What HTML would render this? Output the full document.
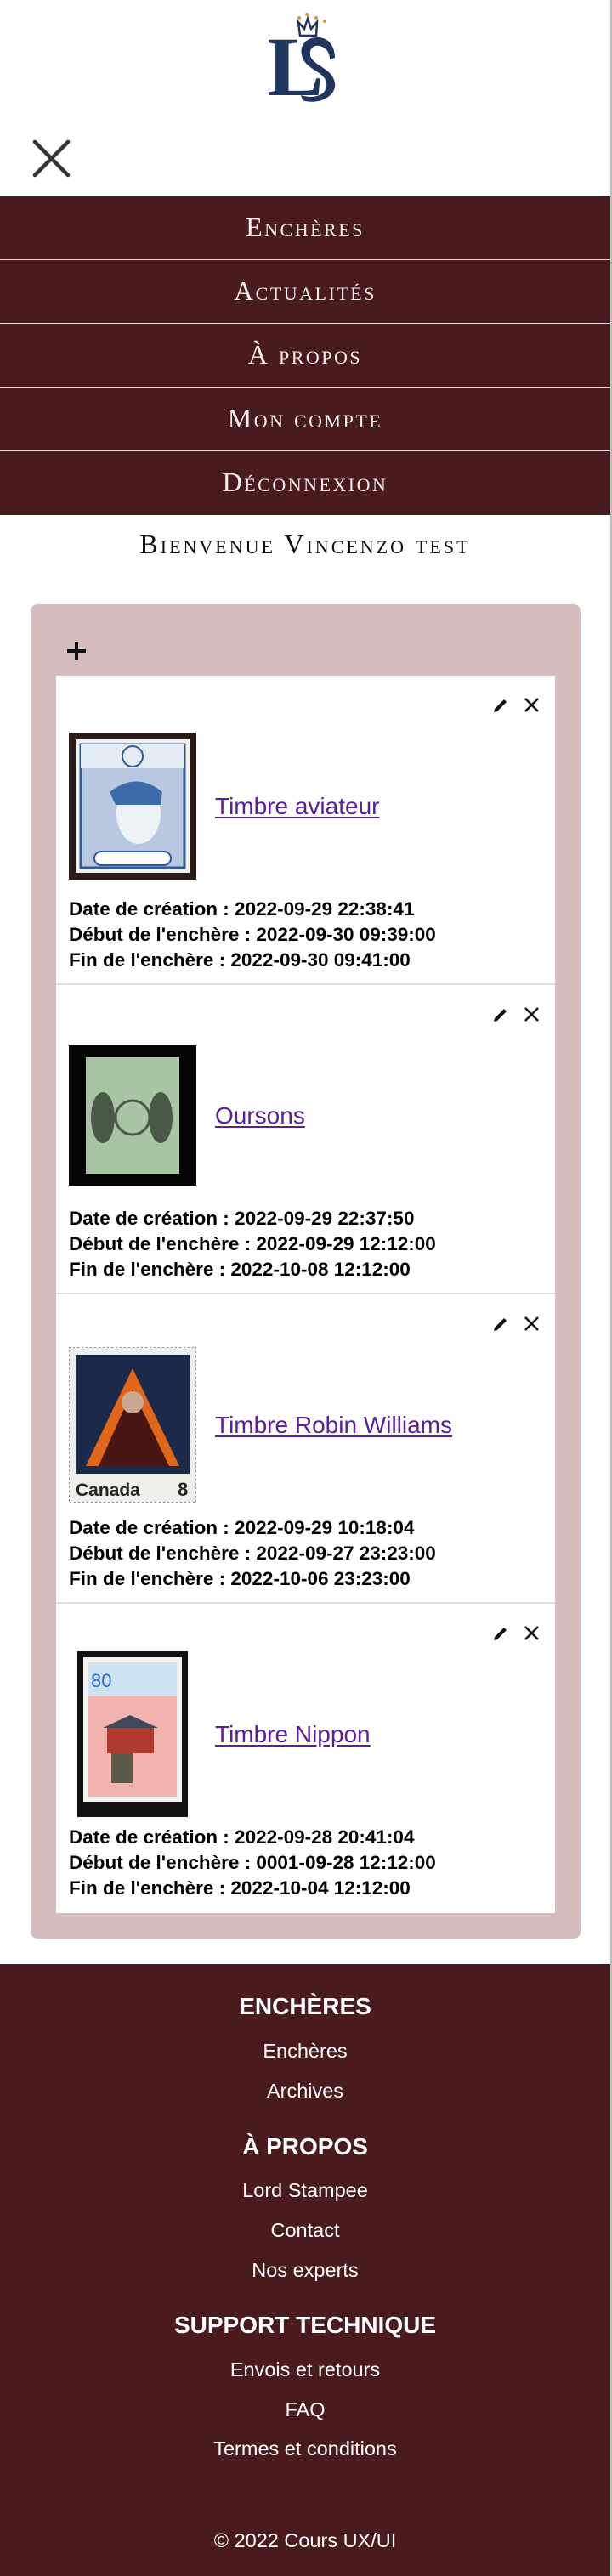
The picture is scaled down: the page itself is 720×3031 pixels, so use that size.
<!DOCTYPE html>
<html><head><meta charset="utf-8">
<style>
*{box-sizing:border-box;margin:0;padding:0}
html,body{width:720px;height:3031px;background:#fff;overflow:hidden}
body{font-family:"Liberation Sans","DejaVu Sans",sans-serif;position:relative}
.edge{position:absolute;right:0;top:0;width:2px;height:3031px;background:#bdbdbd;z-index:5}
.logo{position:absolute;left:316px;top:14px;width:90px;height:110px}
.close{position:absolute;left:38px;top:164px;width:45px;height:45px}
nav{position:absolute;top:231px;left:0;width:718px}
nav div{height:75px;background:#4a1b1d;color:#f3eded;font-family:"Liberation Serif",serif;font-variant:small-caps;font-size:32px;letter-spacing:2.5px;text-align:center;line-height:72px;border-bottom:1px solid #e8dede}
nav div:last-child{border-bottom:none;height:75px}
.welcome{position:absolute;top:622px;left:0;width:718px;text-align:center;font-family:"Liberation Serif",serif;font-variant:small-caps;font-size:32px;letter-spacing:3px;color:#111}
.panel{position:absolute;left:36px;top:711px;width:647px;height:1570px;background:#d5bdbe;border-radius:8px}
.plus{position:absolute;left:42px;top:43px;width:24px;height:24px}
.card{position:absolute;left:30px;top:84px;width:587px;height:1456px;background:#fff}
.item{position:relative;height:364px;border-bottom:2px solid #dde0e6}
.item:last-child{border-bottom:none}
.icons{position:absolute;right:18px;top:25px;width:56px;height:20px}
.row{position:absolute;left:15px;top:67px;height:173px;display:flex;align-items:center}
.st{width:172px;display:flex;align-items:center}
.row a{color:#5a1e9a;font-size:28px;text-decoration:underline;text-underline-offset:3px}
.dates{position:absolute;left:15px;top:260px;font-weight:bold;font-size:22.5px;line-height:30px;color:#000}
footer{position:absolute;top:2311px;left:0;width:718px;height:720px;background:#4a1b1d;color:#fff;text-align:center}
footer h3{position:absolute;left:0;width:100%;font-size:28px;font-weight:bold}
footer p{position:absolute;left:0;width:100%;font-size:23.5px}
</style></head><body>
<div class="edge"></div>
<svg class="logo" viewBox="0 0 90 110">
<g fill="#d49a3a"><circle cx="45" cy="3" r="2"/><circle cx="56" cy="7" r="2"/><circle cx="66" cy="11" r="2"/><circle cx="36" cy="7" r="2"/></g>
<path d="M37 28 L35 12 L42 20 L46 8 L50 20 L57 12 L56 28 Z" fill="none" stroke="#1f3560" stroke-width="2.5"/>
<text x="-2" y="98" font-family="Liberation Serif" font-weight="bold" font-size="100" fill="#1f3560">L</text>
<path d="M58 30 C40 30 34 45 42 58 C50 70 70 72 68 88 C66 100 50 102 38 98 L40 104 C58 110 80 100 78 84 C76 68 56 64 50 54 C46 46 52 38 60 40 C68 42 72 48 72 56 L78 54 C78 40 70 30 58 30Z" fill="#1f3560"/>
</svg>
<svg class="close" viewBox="0 0 45 45"><path d="M3 3 L42 42 M42 3 L3 42" stroke="#333" stroke-width="4.5" stroke-linecap="round"/></svg>
<nav><div>Enchères</div><div>Actualités</div><div>À propos</div><div>Mon compte</div><div>Déconnexion</div></nav>
<div class="welcome">Bienvenue Vincenzo test</div>
<div class="panel">
<svg class="plus" viewBox="0 0 24 24"><path d="M12 1V23M1 12H23" stroke="#111" stroke-width="4"/></svg>
<div class="card">

<div class="item">
<svg class="icons" viewBox="0 0 56 20"><path d="M2 18 L3 14 L14 3 L17 6 L6 17 Z" fill="#111"/><path d="M39 2 L54 17 M54 2 L39 17" stroke="#111" stroke-width="2.5"/></svg>
<div class="row"><div class="st"><svg width="150" height="173" viewBox="0 0 150 173"><rect width="150" height="173" fill="#2a1a18"/><rect x="8" y="8" width="134" height="157" fill="#f2f0ea"/><rect x="14" y="14" width="122" height="145" fill="#b8c8e0" stroke="#2c5a9a" stroke-width="3"/><rect x="14" y="14" width="122" height="28" fill="#e6ecf4"/><circle cx="75" cy="28" r="12" fill="none" stroke="#2c5a9a" stroke-width="2"/><ellipse cx="82" cy="95" rx="26" ry="36" fill="#eef1f5"/><path d="M48 70 Q80 45 110 70 L108 85 L55 85Z" fill="#3d6aa8"/><rect x="30" y="140" width="90" height="16" rx="8" fill="#fff" stroke="#2c5a9a" stroke-width="2"/></svg></div><a>Timbre aviateur</a></div>
<div class="dates">Date de création : 2022-09-29 22:38:41<br>Début de l'enchère : 2022-09-30 09:39:00<br>Fin de l'enchère : 2022-09-30 09:41:00</div>
</div>

<div class="item">
<svg class="icons" viewBox="0 0 56 20"><path d="M2 18 L3 14 L14 3 L17 6 L6 17 Z" fill="#111"/><path d="M39 2 L54 17 M54 2 L39 17" stroke="#111" stroke-width="2.5"/></svg>
<div class="row"><div class="st"><svg width="150" height="165" viewBox="0 0 150 165"><rect width="150" height="165" fill="#050505"/><rect x="20" y="14" width="110" height="137" fill="#a9c4a5"/><ellipse cx="40" cy="85" rx="14" ry="30" fill="#4b5a48"/><ellipse cx="108" cy="85" rx="14" ry="30" fill="#4b5a48"/><circle cx="75" cy="85" r="20" fill="none" stroke="#4b5a48" stroke-width="3"/></svg></div><a>Oursons</a></div>
<div class="dates">Date de création : 2022-09-29 22:37:50<br>Début de l'enchère : 2022-09-29 12:12:00<br>Fin de l'enchère : 2022-10-08 12:12:00</div>
</div>

<div class="item">
<svg class="icons" viewBox="0 0 56 20"><path d="M2 18 L3 14 L14 3 L17 6 L6 17 Z" fill="#111"/><path d="M39 2 L54 17 M54 2 L39 17" stroke="#111" stroke-width="2.5"/></svg>
<div class="row"><div class="st"><svg width="150" height="183" viewBox="0 0 150 183"><rect width="150" height="183" fill="#eeeeea" stroke="#333" stroke-dasharray="2 3"/><rect x="8" y="9" width="134" height="140" fill="#1b2a4a"/><path d="M20 140 L75 25 L130 140Z" fill="#e0671a"/><path d="M35 140 L75 50 L118 140Z" fill="#4a1515"/><circle cx="75" cy="65" r="13" fill="#c9a892"/><text x="8" y="175" font-size="21" font-weight="bold" fill="#222" font-family="Liberation Sans">Canada</text><text x="128" y="175" font-size="22" font-weight="bold" fill="#222" font-family="Liberation Sans">8</text></svg></div><a>Timbre Robin Williams</a></div>
<div class="dates">Date de création : 2022-09-29 10:18:04<br>Début de l'enchère : 2022-09-27 23:23:00<br>Fin de l'enchère : 2022-10-06 23:23:00</div>
</div>

<div class="item">
<svg class="icons" viewBox="0 0 56 20"><path d="M2 18 L3 14 L14 3 L17 6 L6 17 Z" fill="#111"/><path d="M39 2 L54 17 M54 2 L39 17" stroke="#111" stroke-width="2.5"/></svg>
<div class="row"><div class="st" style="padding-left:10px"><svg width="130" height="195" viewBox="0 0 130 195"><rect width="130" height="195" fill="#111"/><rect x="7" y="7" width="116" height="170" fill="#f6f2f0"/><rect x="13" y="13" width="104" height="158" fill="#f3b4b0"/><rect x="13" y="13" width="104" height="40" fill="#cfe3f3"/><text x="16" y="42" font-size="22" fill="#2a6ad0" font-family="Liberation Sans">80</text><rect x="35" y="90" width="55" height="30" fill="#b03a2e"/><path d="M30 90 L62 75 L95 90Z" fill="#3f4a5a"/><rect x="40" y="120" width="25" height="35" fill="#5a5a4a"/></svg></div><a>Timbre Nippon</a></div>
<div class="dates">Date de création : 2022-09-28 20:41:04<br>Début de l'enchère : 0001-09-28 12:12:00<br>Fin de l'enchère : 2022-10-04 12:12:00</div>
</div>

</div></div>

<footer>
<h3 style="top:34px">ENCHÈRES</h3>
<p style="top:89px">Enchères</p>
<p style="top:136px">Archives</p>
<h3 style="top:199px">À PROPOS</h3>
<p style="top:253px">Lord Stampee</p>
<p style="top:300px">Contact</p>
<p style="top:347px">Nos experts</p>
<h3 style="top:409px">SUPPORT TECHNIQUE</h3>
<p style="top:464px">Envois et retours</p>
<p style="top:511px">FAQ</p>
<p style="top:557px">Termes et conditions</p>
<p style="top:665px">© 2022 Cours UX/UI</p>
</footer>
</body></html>
